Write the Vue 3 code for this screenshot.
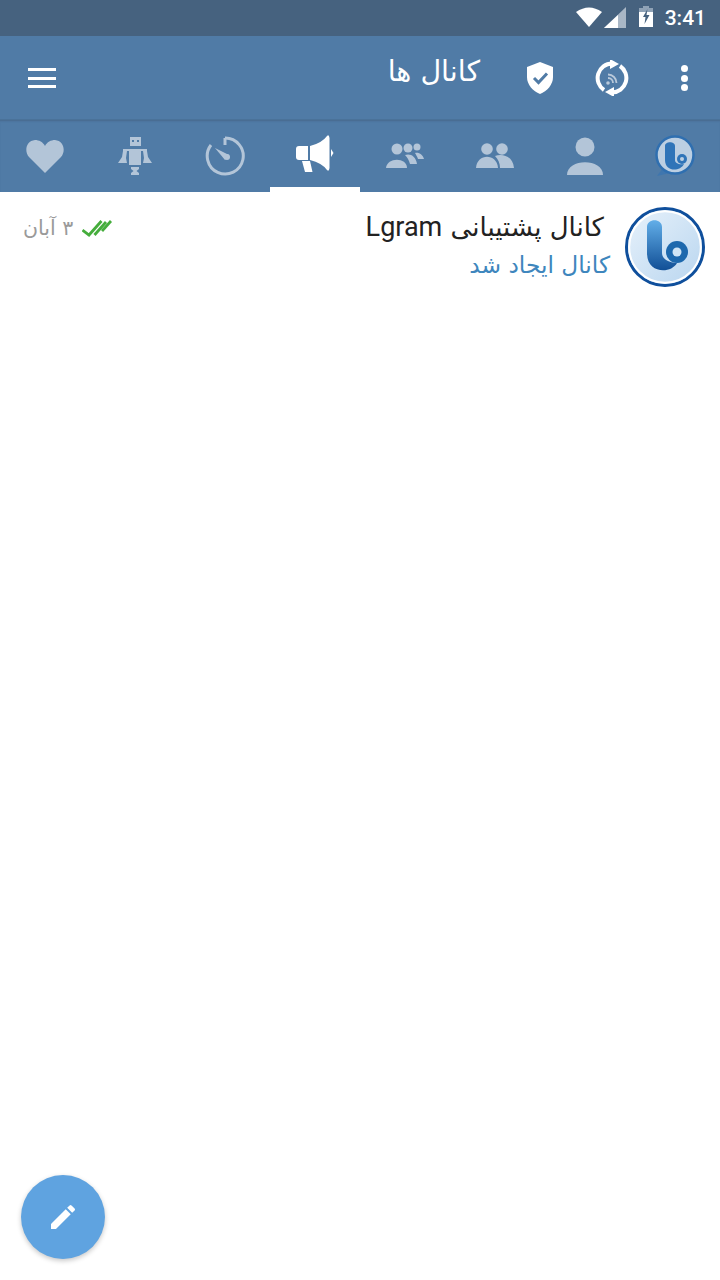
<script setup>
const tabs = ['heart', 'robot', 'timer', 'mega', 'crowd', 'duo', 'user', 'logo']
</script>

<template>
  <div class="screen">
    <header class="status">
      <svg class="wifi" width="26" height="20" viewBox="0 0 26 20"><path d="M0 5Q13 -4 26 5L13 20Z" fill="#fff"/></svg>
      <svg class="signal" width="22" height="21" viewBox="0 0 22 21"><path d="M22 0V21H0Z" fill="#a9b7c6"/><path d="M14 8V21H0Z" fill="#fff"/></svg>
      <svg class="battery" width="14" height="21" viewBox="0 0 14 21"><path d="M4 0H10V2H14V21H0V2H4Z" fill="#8fa2b6"/><path d="M0 6H14V21H0Z" fill="#fff"/><path d="M8.500 3L4 11H6.500L5.500 18L10.500 9H7.500Z" fill="#46627f"/></svg>
      <span class="time">3:41</span>
    </header>

    <div class="toolbar">
      <button class="menu" aria-label="menu"><i></i><i></i><i></i></button>
      <h1 class="title">کانال ها</h1>
      <svg class="shield" width="26" height="32" viewBox="0 0 26 32"><path d="M13 0L26 5V15C26 23 20 29 13 32C6 29 0 23 0 15V5Z" fill="#fff"/><path d="M7 16L11.500 20.500L20 11.500" fill="none" stroke="#507ba6" stroke-width="3"/></svg>
      <svg class="sync" width="34" height="36" viewBox="0 0 34 36">
        <path d="M9 30A14.500 14.500 0 0 1 17 3.500" fill="none" stroke="#fff" stroke-width="4"/>
        <path d="M25 6A14.500 14.500 0 0 1 17 32.500" fill="none" stroke="#fff" stroke-width="4"/>
        <path d="M15 -1L24 4L15 9Z" fill="#fff"/><path d="M19 27L10 32L19 37Z" fill="#fff"/>
        <circle cx="13" cy="23" r="1.800" fill="#b9c9da"/>
        <path d="M13 18A5 5 0 0 1 18 23M13 14.500A8.500 8.500 0 0 1 21.500 23" fill="none" stroke="#b9c9da" stroke-width="1.800"/>
      </svg>
      <div class="dots"><i></i><i></i><i></i></div>
    </div>

    <nav class="tabs">
      <div v-for="t in tabs" :key="t" class="tab" :class="{ active: t === 'mega' }">
        <svg v-if="t === 'heart'" width="38" height="36" viewBox="0 0 38 36"><path d="M19 35L3 19C-2 13 0 3 9 2C13 2 17 4 19 8C21 4 25 2 29 2C38 3 40 13 35 19Z" fill="#b3c5d8"/></svg>
        <svg v-else-if="t === 'robot'" width="34" height="40" viewBox="0 0 34 40">
          <path fill-rule="evenodd" d="M12 1H23V10H12ZM14 4V6H16V4ZM19 4V6H21V4Z" fill="#b3c5d8"/>
          <path d="M5 13H29V15H5Z" fill="#b3c5d8"/>
          <path d="M11 15H23V29H11Z" fill="#b3c5d8"/>
          <path d="M5 15H9L8 22L9 27H0L4 21Z" fill="#b3c5d8"/>
          <path d="M29 15H25L26 22L25 27H34L30 21Z" fill="#b3c5d8"/>
          <path d="M13 31H21V33L18.500 35L21 37V39H13V37L15.500 35L13 33Z" fill="#b3c5d8"/>
        </svg>
        <svg v-else-if="t === 'timer'" width="40" height="40" viewBox="0 0 40 40"><path d="M20 2A18 18 0 1 1 6 9" fill="none" stroke="#b3c5d8" stroke-width="3"/><path d="M20 2V9" stroke="#b3c5d8" stroke-width="3"/><path d="M10 12L24 19L20 24Z" fill="#b3c5d8"/><circle cx="22" cy="21" r="3" fill="#b3c5d8"/></svg>
        <svg v-else-if="t === 'mega'" width="38" height="38" viewBox="0 0 38 38" fill="#fff"><path d="M0 14Q0 11 3 11H12V25H3Q0 25 0 22Z"/><path d="M14 11Q26 8 31 1Q33 -1 33.500 3V33Q33 37 31 35Q26 28 14 25Z"/><path d="M35 14L37.500 18L35 22Z"/><path d="M6 26H14L16.500 37H9Z"/></svg>
        <svg v-else-if="t === 'crowd'" width="40" height="26" viewBox="0 0 40 26" fill="#b3c5d8"><circle cx="12" cy="6" r="5.500"/><circle cx="23" cy="5" r="4.500"/><circle cx="32" cy="4" r="3.500"/><path d="M1 25C2 14 22 14 22 25Z"/><path d="M20 12C25 10 31 13 32 21H25C24 17 22 14 20 12Z"/><path d="M30 10C34 9 38 12 39 16H33C32 13 31 12 30 10Z"/></svg>
        <svg v-else-if="t === 'duo'" width="38" height="26" viewBox="0 0 38 26" fill="#b3c5d8"><circle cx="11" cy="6" r="5.800"/><circle cx="26" cy="6" r="5.800"/><path d="M0 25C1 10 21 10 22 25Z"/><path d="M19 13C26 10 37 13 38 25H24C24 20 22 16 19 13Z"/></svg>
        <svg v-else-if="t === 'user'" width="36" height="38" viewBox="0 0 36 38" fill="#b3c5d8"><circle cx="18" cy="10" r="9.500"/><path d="M0 38C0 21 36 21 36 38Z"/></svg>
        <svg v-else width="42" height="44" viewBox="0 0 42 44">
          <path d="M9 34L3 42L16 39Z" fill="#3f76ae"/>
          <circle cx="21" cy="21" r="18.500" fill="#bccfe2" stroke="#2f6fb0" stroke-width="2.500"/>
          <path d="M11 12C11 7 21 7 21 12V26C21 29 25 31 30 30C26 38 11 38 11 26Z" fill="#2f74b8"/>
          <circle cx="28" cy="25" r="5" fill="#2f74b8"/><circle cx="28" cy="25" r="2" fill="#bccfe2"/>
        </svg>
      </div>
    </nav>

    <main class="list">
      <article class="row">
        <div class="meta">
          <span class="date">۳ آبان</span>
          <svg width="30" height="18" viewBox="0 0 30 18" fill="none" stroke="#45ad3c" stroke-width="2.800"><path d="M0.500 11L7 16L19.500 2"/><path d="M12.500 16L24 3"/><path d="M20 12L29 2"/></svg>
        </div>
        <div class="body">
          <div class="name">کانال پشتیبانی <span class="latin">Lgram</span></div>
          <div class="sub">کانال ایجاد شد</div>
        </div>
        <svg class="avatar" width="80" height="80" viewBox="0 0 80 80">
          <defs>
            <linearGradient id="face" x1="0" y1="0" x2="1" y2="1"><stop offset="0" stop-color="#e8f2fb"/><stop offset="1" stop-color="#b8d5ef"/></linearGradient>
            <linearGradient id="mark" x1="0" y1="0" x2="0" y2="1"><stop offset="0" stop-color="#62aee8"/><stop offset="1" stop-color="#114f96"/></linearGradient>
          </defs>
          <circle cx="40" cy="40" r="38.500" fill="url(#face)" stroke="#0f4f9c" stroke-width="3"/>
          <circle cx="40" cy="40" r="35.800" fill="none" stroke="#fff" stroke-width="2"/>
          <path d="M22 20C22 11 37 11 37 20V46C37 52 44 56 52 56C46 67 22 67 22 46Z" fill="url(#mark)"/>
          <circle cx="52" cy="45" r="11" fill="#1d68ad"/><circle cx="52" cy="45" r="4.500" fill="#cfe4f5"/>
        </svg>
      </article>
    </main>

    <button class="fab" aria-label="new">
      <svg width="32" height="32" viewBox="0 0 24 24"><path d="M3 17.250V21h3.750L17.810 9.940l-3.750-3.750L3 17.250zM20.710 7.040a1 1 0 0 0 0-1.410l-2.340-2.340a1 1 0 0 0-1.410 0l-1.830 1.830 3.750 3.750 1.830-1.830z" fill="#fff"/></svg>
    </button>
  </div>
</template>

<style scoped>
.screen {
  position: relative;
  width: 720px;
  height: 1280px;
  background: #fff;
  overflow: hidden;
  font-family: "DejaVu Sans", Roboto, sans-serif;
}
.status {
  height: 36px;
  box-sizing: border-box;
  background: #46627f;
  display: flex;
  align-items: center;
  justify-content: flex-end;
  padding-right: 14px;
}
.wifi { margin-top: -2px; }
.signal { margin-left: 2px; margin-top: -1px; }
.battery { margin-left: 13px; margin-top: -3px; }
.time {
  margin-left: 12px;
  font: 500 21px Roboto, sans-serif;
  color: #fff;
}
.toolbar {
  height: 84px;
  background: #507ba6;
  display: flex;
  align-items: center;
  position: relative;
  box-sizing: border-box;
  padding-left: 28px;
  box-shadow: inset 0 -1px 0 #4a7299;
}
.menu {
  width: 28px;
  height: 20px;
  padding: 0;
  border: 0;
  background: none;
  display: flex;
  flex-direction: column;
  justify-content: space-between;
}
.menu i { display: block; height: 3px; background: #fff; }
.title {
  margin: -14px 0 0 332px;
  width: 92px;
  font: 400 28.500px "DejaVu Sans", sans-serif;
  color: #fff;
  direction: rtl;
  white-space: nowrap;
}
.shield { margin-left: 47px; }
.sync { margin-left: 42px; }
.dots {
  margin-left: 51.500px;
  width: 8px;
  height: 26px;
  display: flex;
  flex-direction: column;
  justify-content: space-between;
}
.dots i { width: 7px; height: 7px; border-radius: 50%; background: #fff; }
.tabs {
  height: 72px;
  background: #507ba6;
  display: flex;
  box-shadow: inset 0 2px 2px -1px #47698c;
}
.tab {
  width: 90px;
  height: 72px;
  box-sizing: border-box;
  display: flex;
  align-items: center;
  justify-content: center;
}
.tab.active { border-bottom: 5px solid #fff; }
.list { display: block; }
.row {
  height: 96px;
  display: flex;
  align-items: flex-start;
  box-sizing: border-box;
  padding: 15px 15px 0 23px;
}
.meta {
  display: flex;
  align-items: center;
  gap: 9px;
  margin-top: 9px;
}
.date {
  direction: rtl;
  font-size: 20.500px;
  color: #9a9a9a;
}
.body {
  flex: 1;
  direction: rtl;
  text-align: right;
  padding-right: 15px;
}
.name {
  font: 400 26px "DejaVu Sans", Roboto, sans-serif;
  color: #222;
  padding-right: 6px;
  white-space: nowrap;
  line-height: 40px;
}
.latin { font: 400 27px Roboto, sans-serif; }
.sub {
  font-size: 23.300px;
  color: #3e86bd;
  line-height: 36px;
  white-space: nowrap;
}
.avatar { flex: none; }
.fab {
  position: absolute;
  left: 21px;
  top: 1175px;
  width: 84px;
  height: 84px;
  padding: 0;
  border: 0;
  border-radius: 50%;
  background: #5fa3e0;
  display: flex;
  align-items: center;
  justify-content: center;
  box-shadow: 0 2px 5px rgba(0, 0, 0, 0.22);
}
</style>
